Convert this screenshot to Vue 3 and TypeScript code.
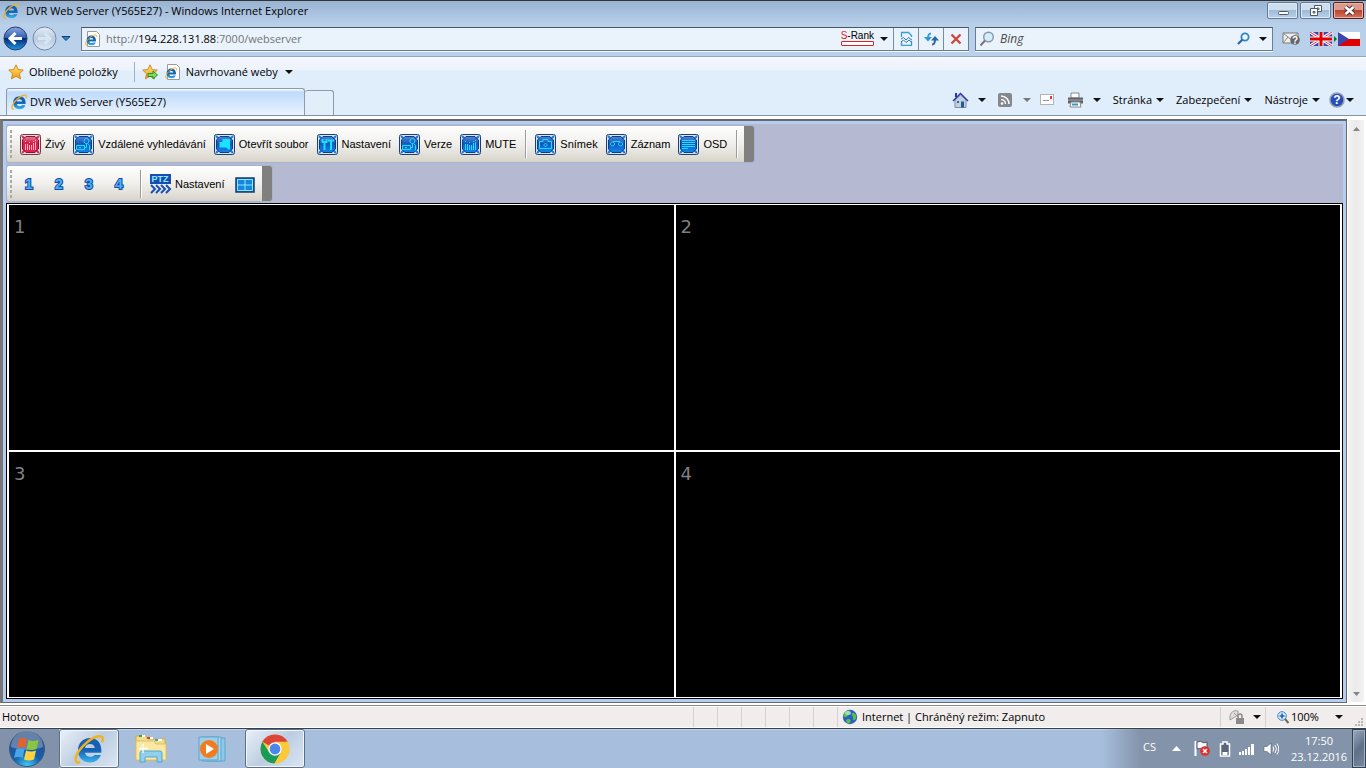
<script setup lang="ts">
import { ref } from 'vue'

type Tool = { id: string; label: string; glyph: string; red?: boolean; sep?: boolean }

const tools: Tool[] = [
  { id: 'live', label: 'Živý', glyph: 'bars', red: true },
  { id: 'search', label: 'Vzdálené vyhledávání', glyph: 'reel' },
  { id: 'open', label: 'Otevřít soubor', glyph: 'folder' },
  { id: 'setup', label: 'Nastavení', glyph: 'wrench' },
  { id: 'version', label: 'Verze', glyph: 'reel' },
  { id: 'mute', label: 'MUTE', glyph: 'bars', sep: true },
  { id: 'snap', label: 'Snímek', glyph: 'camera' },
  { id: 'record', label: 'Záznam', glyph: 'tape' },
  { id: 'osd', label: 'OSD', glyph: 'lines', sep: true },
]

const glyphs: Record<string, string> = {
  bars: 'M5.5 7v1M5.5 10v6M7.5 10v6M9.5 8v1M9.5 11v5M11.5 11v5M13.5 7v1M13.5 9v7M15.5 6v1M15.5 8v8',
  reel: 'M3.500 11.500h8v4h-8zM6 13.500h2M13.500 4.500a2.500 2.500 0 1 1-.1 0M11.500 13.500h2v-4M15 9.500l1.500 2v5',
  wrench: 'M5.500 5v3h4V5M7.500 8v8M11 6.500h6M14 6v10',
  camera: 'M4.500 7.500h3.500v-2h5v2h3.500v7h-12zM10.500 9.500a1.500 1.500 0 1 0 .1 0',
  tape: 'M6.500 8a2 2 0 1 0 .1 0M14.500 8a2 2 0 1 0 .1 0M7 7.500h7',
  lines: 'M4 6.500h13M4 8.500h13M4 10.500h13M4 12.500h13M4 14.500h6',
}

const address = ref('http://194.228.131.88:7000/webserver')
const query = ref('')
const cameras = [1, 2, 3, 4]
const menus = ['Stránka', 'Zabezpečení', 'Nástroje']
</script>

<template>
  <svg class="defs" aria-hidden="true">
    <defs>
      <linearGradient id="gold" x1="0" y1="0" x2="0" y2="1"><stop offset="0" stop-color="#ffe77a" /><stop offset="1" stop-color="#f39a10" /></linearGradient>
      <radialGradient id="orb" cx=".5" cy="1" r=".9"><stop offset="0" stop-color="#3fd0fa" /><stop offset=".45" stop-color="#125fae" /><stop offset="1" stop-color="#2a4f85" /></radialGradient>
      <linearGradient id="back" x1="0" y1="0" x2="0" y2="1"><stop offset="0" stop-color="#8fa9dc" /><stop offset=".48" stop-color="#2d5db5" /><stop offset=".5" stop-color="#06266f" /><stop offset="1" stop-color="#1d9ae8" /></linearGradient>
      <linearGradient id="fwd" x1="0" y1="0" x2="0" y2="1"><stop offset="0" stop-color="#e6eef8" /><stop offset=".5" stop-color="#b9cbe0" /><stop offset="1" stop-color="#dce8f5" /></linearGradient>
      <linearGradient id="ieblue" x1="0" y1="0" x2="0" y2="1"><stop offset="0" stop-color="#1a5fae" /><stop offset=".5" stop-color="#1462b4" /><stop offset="1" stop-color="#39b4ef" /></linearGradient>
      <linearGradient id="tileblue" x1="0" y1="0" x2="0" y2="1"><stop offset="0" stop-color="#4f86d6" /><stop offset=".45" stop-color="#1258bd" /><stop offset="1" stop-color="#1187f0" /></linearGradient>
      <linearGradient id="tilered" x1="0" y1="0" x2="0" y2="1"><stop offset="0" stop-color="#e6809a" /><stop offset=".4" stop-color="#cf1f4a" /><stop offset="1" stop-color="#e8204c" /></linearGradient>
      <symbol id="ie" viewBox="0.500 0.500 15 15">
        <path d="M14.200 9.900H6c.2 1.400 1.200 2 2.600 2 1 0 1.700-.3 2.200-.9h3.100c-.8 2.300-2.800 3.700-5.400 3.700-3.500 0-6-2.400-6-6S5 2.500 8.500 2.500c3.700 0 6 2.700 5.700 7.400zM10.900 7.500C10.700 6.200 9.800 5.500 8.500 5.500S6.300 6.200 6 7.500z" fill="url(#ieblue)" />
        <path d="M14.500 4.600c.9-2.300.1-3.300-1.800-3-3.800.6-9.300 5.700-11 9.600-1 2.500-.1 4 1.900 3.400" fill="none" stroke="#f2b21c" stroke-width="1.200" />
      </symbol>
      <symbol id="iepage" viewBox="0 0 16 16"><path d="M2.500 .5h9l3 3v12h-12z" fill="#fff" stroke="#9a9a9a" /><use href="#ie" x="0" y="3" width="12" height="12" /></symbol>
      <symbol id="star" viewBox="0 0 16 16"><path d="M8 .8l2.200 4.700 5.100.6-3.800 3.500 1 5.200L8 12.300l-4.500 2.500 1-5.200L.7 6.100l5.100-.6z" fill="url(#gold)" stroke="#c9831c" stroke-width=".9" /></symbol>
    </defs>
  </svg>

  <div class="screen">
    <header class="chrome">
      <div class="title-row">
        <svg class="i16"><use href="#ie" /></svg>
        <h1>DVR Web Server (Y565E27) - Windows Internet Explorer</h1>
        <div class="win-buttons">
          <button aria-label="Minimalizovat"><svg width="28" height="15"><rect x="9.500" y="8.500" width="10" height="3" rx="1" fill="#fff" stroke="#4d5868" /></svg></button>
          <button aria-label="Obnovit"><svg width="28" height="15" fill="#fff" stroke="#4d5868"><path d="M12.500 2.500h7v6h-7zM15 5h2v1.500h-2z" /><path d="M8.500 5.500h7v7h-7zM11 8.500h2v1.500h-2z" /></svg></button>
          <button class="close" aria-label="Zavřít"><svg width="28" height="15"><path d="M10.500 4l8 7M18.500 4l-8 7" stroke="#4b3239" stroke-width="4.500" /><path d="M10.500 4l8 7M18.500 4l-8 7" stroke="#fff" stroke-width="2.500" /></svg></button>
        </div>
      </div>

      <div class="nav-row">
        <div class="travel">
          <button aria-label="Zpět"><svg width="25" height="25"><circle cx="12.500" cy="12.500" r="11.500" fill="url(#back)" stroke="#24406f" /><path d="M19 12.500H8M12.500 7l-5.500 5.500 5.500 5.500" fill="none" stroke="#fff" stroke-width="3" /></svg></button>
          <button aria-label="Vpřed"><svg width="25" height="25"><circle cx="12.500" cy="12.500" r="11.500" fill="url(#fwd)" stroke="#74869f" /><path d="M6 12.500h11M12.500 7l5.500 5.500-5.500 5.500" fill="none" stroke="#d9e5f2" stroke-width="3" /></svg></button>
          <button aria-label="Poslední stránky"><svg width="10" height="7"><path d="M1 1.500h8L5 5.500z" fill="#2388d6" stroke="#163d70" /></svg></button>
        </div>
        <div class="address">
          <svg class="i16"><use href="#iepage" /></svg>
          <div class="url">
            <input v-model="address" type="text" aria-label="Adresa" spellcheck="false" />
            <span aria-hidden="true">http://<b>194.228.131.88</b>:7000/webserver</span>
          </div>
          <button class="rank"><span><i>S</i>-Rank</span></button>
          <button class="drop" aria-label="Zobrazit adresy"><span class="tri"></span></button>
          <button class="cell" aria-label="Kompatibilní zobrazení"><svg width="13" height="15" fill="none" stroke="#37a0d2"><path d="M1.500 6V1.500h7l3 3V6M1.500 10v4.500h10V10" stroke-width="1.300" /><path d="M1 8l2.500-1.500L6 9l2.500-2.500L12 9M1 11l2.500-2 2.500 2.500L9 9l3 2.500" stroke="#3377b8" /></svg></button>
          <button class="cell" aria-label="Aktualizovat"><svg width="15" height="14" fill="none" stroke-width="2"><path d="M7 1.500C4.500 1.500 4 3 4 7" stroke="#2a9ad6" /><path d="M0 5h8L4 9.500z" fill="#2a9ad6" /><path d="M8 12.500c2.500 0 3-1.500 3-5.500" stroke="#2865a8" /><path d="M7 8.500h8L11 4z" fill="#2865a8" /></svg></button>
          <button class="cell" aria-label="Zastavit"><svg width="12" height="12"><path d="M1.500 1.500l9 9M10.500 1.500l-9 9" stroke="#cc4642" stroke-width="2.400" /></svg></button>
        </div>
        <div class="search">
          <svg width="16" height="16"><circle cx="9.500" cy="6" r="4.800" fill="#d4ecfb" stroke="#8796a8" stroke-width="1.400" /><path d="M6 9.500L1.500 14.500" stroke="#777" stroke-width="2" /></svg>
          <input v-model="query" type="text" placeholder="Bing" aria-label="Hledat" />
          <button aria-label="Hledat"><svg width="13" height="13"><circle cx="8" cy="5" r="3.600" fill="#eef6fe" stroke="#2c86cc" stroke-width="1.800" /><path d="M5.500 7.500L1 12" stroke="#2b62a8" stroke-width="2.200" /></svg></button>
          <button aria-label="Možnosti hledání"><span class="tri"></span></button>
        </div>
        <button class="mail" aria-label="Zpráva"><svg width="19" height="15"><path d="M1 2h15v10H1z" fill="#eee" stroke="#777" /><path d="M1 2l7.500 6L16 2M1 12l5-6" fill="none" stroke="#888" /><circle cx="13" cy="9" r="4.800" fill="#666" /><text x="13" y="13" class="q" text-anchor="middle">?</text></svg></button>
        <button class="flags" aria-label="Přeložit">
          <svg width="50" height="14"><path d="M0 0h22v14H0z" fill="#3c46b0" /><path d="M0 0l22 14M22 0L0 14" stroke="#fff" stroke-width="3" /><path d="M0 0l22 14M22 0L0 14" stroke="#e23040" /><path d="M11 0v14M0 7h22" stroke="#fff" stroke-width="5" /><path d="M11 0v14M0 7h22" stroke="#e00000" stroke-width="3" /><path d="M24 4l3 3-3 3z" fill="#087a1d" /><path d="M28 0h22v7H28z" fill="#fff" /><path d="M28 7h22v7H28z" fill="#e00000" /><path d="M28 0l11 7-11 7z" fill="#3c46b0" /></svg>
        </button>
      </div>

      <div class="fav-row">
        <button><svg class="i16"><use href="#star" /></svg>Oblíbené položky</button>
        <span class="vline"></span>
        <button aria-label="Přidat k oblíbeným"><svg class="i16"><use href="#star" /><path d="M6 9.500h5V7l4.500 4-4.500 4v-2.500H6z" fill="#7be05c" stroke="#24922a" /></svg></button>
        <button class="sites"><svg class="i16"><use href="#iepage" /></svg>Navrhované weby<span class="tri"></span></button>
      </div>

      <div class="tab-row">
        <button class="tab"><svg class="i16"><use href="#ie" /></svg>DVR Web Server (Y565E27)</button>
        <button class="new-tab" aria-label="Nová karta"></button>
        <nav class="commands">
          <button class="home" aria-label="Domů"><svg width="17" height="17"><path d="M3 8v7.500h11V8L8.500 3z" fill="#c3d0e0" stroke="#7c8da4" /><path d="M1 9l7.500-7.500L16 9" fill="none" stroke="#2836a8" stroke-width="1.400" /><path d="M3 1h2v4H3z" fill="#2836a8" /><path d="M9 9.500h3v6H9z" fill="#1f5d96" /><path d="M5 9h2v2H5z" fill="#396487" /></svg><span class="tri"></span></button>
          <button class="feeds" aria-label="Kanály"><svg width="14" height="14"><rect width="14" height="14" rx="2" fill="#85888c" /><circle cx="4" cy="10.500" r="1.300" fill="#fff" /><path d="M3 6.500a4.500 4.500 0 0 1 4.500 4.500M3 3a8 8 0 0 1 8 8" fill="none" stroke="#fff" stroke-width="1.500" /></svg><span class="tri pale"></span></button>
          <button class="letter" aria-label="Číst poštu"><svg width="15" height="12"><rect x=".5" y=".5" width="13" height="10" fill="#fff" stroke="#b3b3b3" /><path d="M10 2h2v3h-2z" fill="#e23a3a" /><path d="M3 6.500h6" stroke="#999" /></svg></button>
          <button class="print" aria-label="Tisk"><svg width="17" height="16"><path d="M4 1h8v5H4z" fill="#fff" stroke="#888" /><path d="M1 5.500h15v6H1z" fill="#606468" /><path d="M1 8h15" stroke="#a3a8ad" /><path d="M4 10h9l1 5H3z" fill="#fff" stroke="#888" /><path d="M5 12.500h6" stroke="#3895c7" stroke-width="2" /></svg><span class="tri"></span></button>
          <button v-for="m in menus" :key="m" class="menu">{{ m }}<span class="tri"></span></button>
          <button class="help" aria-label="Nápověda"><svg width="16" height="16"><circle cx="8" cy="8" r="7" fill="#2450b8" stroke="#98a1b2" stroke-width="1.500" /><text x="8" y="12" class="q big" text-anchor="middle">?</text></svg><span class="tri"></span></button>
        </nav>
      </div>
    </header>

    <div class="viewport">
      <main class="page">
        <div class="toolbar main-tools" role="toolbar">
          <span class="grip"></span>
          <template v-for="t in tools" :key="t.id">
            <button class="tool">
              <svg width="21" height="21">
                <rect x=".5" y=".5" width="20" height="20" rx="2" :fill="t.red ? '#efd6dd' : '#d5e5f8'" :stroke="t.red ? '#7c3448' : '#1b3f74'" />
                <path d="M2 2l3 3M19 2l-3 3M2 19l3-3M19 19l-3-3" :stroke="t.red ? '#b83a5c' : '#2277dd'" stroke-width="2" />
                <path d="M6 2.500h9l1 1.500 2.500 2v9L17 16l-2 2.500H6L4.500 17l-2-2V6L4 4.500z" :fill="t.red ? 'url(#tilered)' : 'url(#tileblue)'" :stroke="t.red ? '#8b1232' : '#12407f'" />
                <path v-if="t.glyph === 'folder'" d="M8.500 5h7.500v10.500h-1.500L12 13.500H5.500V8h3z" fill="#18e4ff" />
                <path v-else :d="glyphs[t.glyph]" fill="none" :stroke="t.red ? '#ffb0c2' : '#18e0ff'" :stroke-width="t.glyph === 'wrench' ? 2 : 1" />
              </svg>{{ t.label }}
            </button>
            <span v-if="t.sep" class="sep"></span>
          </template>
          <span class="end"></span>
        </div>

        <div class="toolbar cam-tools" role="toolbar">
          <span class="grip"></span>
          <button v-for="n in cameras" :key="n" class="num">{{ n }}</button>
          <span class="sep"></span>
          <button class="ptz">
            <svg width="22" height="22"><rect width="21" height="10" y="1" fill="#174cb3" /><text x="10" y="9" class="ptz-text" text-anchor="middle">PTZ</text><path d="M1 12l4 4-4 4M6 12l4 4-4 4M11 12l4 4-4 4M16 12l4 4-4 4" fill="none" stroke="#1550b8" stroke-width="2" /></svg>Nastavení
          </button>
          <button class="quad" aria-label="Čtyři kamery"><svg width="20" height="16"><rect x="1" y="1" width="18" height="14" fill="#1685dd" stroke="#153d70" stroke-width="1.500" /><path d="M2.500 2.500h15v11h-15zM10 2v12M2 8h16" fill="none" stroke="#8be9ff" /></svg></button>
          <span class="end"></span>
        </div>

        <div class="wall">
          <section v-for="n in cameras" :key="n" class="feed">{{ n }}</section>
        </div>
      </main>
      <div class="scroll">
        <button aria-label="Nahoru"><svg width="7" height="4"><path d="M0 4l3.500-4L7 4z" fill="#858585" /></svg></button>
        <button aria-label="Dolů"><svg width="7" height="4"><path d="M0 0h7L3.500 4z" fill="#858585" /></svg></button>
      </div>
    </div>

    <div class="status">
      <span class="done">Hotovo</span>
      <span v-for="k in 6" :key="k" class="slot"></span>
      <span class="zone">
        <svg width="16" height="16"><circle cx="8" cy="8" r="7.200" fill="#2c5fc4" /><path d="M3 3c3-2 5-2 5 0S6 7 4 8 1 7 2 5zM10 4c3 0 5 2 4 5s-3 3-3 0-2-3-1-5zM6 10c3 0 3 2 2 4-2 1-4-1-4-3z" fill="#58c43c" /><ellipse cx="6" cy="4" rx="3" ry="2" fill="#d7f2ff" opacity=".6" /></svg>
        Internet | Chráněný režim: Zapnuto
      </span>
      <button class="guard" aria-label="Filtrování"><svg width="16" height="16"><path d="M1 8a6 6 0 0 1 8-6v4L1 11z" fill="#ddd" stroke="#999" /><path d="M5 4l4 4" stroke="#999" /><rect x="7" y="9" width="8" height="6" fill="#8a8a8a" /><path d="M9 9V7a2 2 0 0 1 4 0v2" fill="none" stroke="#8a8a8a" stroke-width="1.500" /></svg><span class="tri"></span></button>
      <button class="zoom"><svg width="12" height="13"><circle cx="5" cy="5" r="4.300" fill="#d9edfb" stroke="#3a86c8" /><path d="M5 2.500v5M2.500 5h5" stroke="#1f62b4" stroke-width="1.600" /><path d="M8 8l3.500 4" stroke="#7b6a50" stroke-width="2" /></svg>100%<span class="tri"></span></button>
      <svg class="corner" width="9" height="9" fill="#b8b8b8"><path d="M6 0h2v2H6zM3 3h2v2H3zM6 3h2v2H6zM0 6h2v2H0zM3 6h2v2H3zM6 6h2v2H6z" /></svg>
    </div>

    <footer class="taskbar">
      <button class="start" aria-label="Start">
        <svg width="38" height="38"><circle cx="19" cy="19" r="17.500" fill="url(#orb)" stroke="#35597f" /><path d="M3 17a16 16 0 0 1 32 0c-10 4-22 4-32 0z" fill="#fff" opacity=".28" /><path d="M11 9q4-2 8 0l-2 9q-4-2-8 0z" fill="#e8602c" /><path d="M20.500 10q4 2 10 0l-2 9q-5 2-10 0z" fill="#8bc53e" /><path d="M8 19.500q4-2 8.500 0l-2 8.500q-4-2-8.500 0z" fill="#4aa5e4" /><path d="M18 20.500q5 2 10 0l-2 9q-5 2-10 0z" fill="#ffd23e" /></svg>
      </button>
      <button class="task open" aria-label="Internet Explorer"><svg width="30" height="30"><use href="#ie" /></svg></button>
      <button class="task" aria-label="Průzkumník">
        <svg width="34" height="32"><path d="M2 3h10l2 3h17v21H2z" fill="#f2dc8a" stroke="#d3ad4c" /><path d="M5 2h6v2H5zM13 4h6v2h-6zM21 6h7v2h-7z" fill="#fff" /><path d="M5 2h3v2H5z" fill="#36b03c" /><path d="M13 4h3v2h-3z" fill="#d6402c" /><path d="M21 6h3v2h-3z" fill="#38a0e0" /><path d="M2 8h18l2 3h10v16H2z" fill="#fae9a4" stroke="#dfbe62" /><path d="M6 29V20q0-2 2-2h18q2 0 2 2v9h-5v-5H11v5z" fill="#8fd0ee" stroke="#54a4cc" /><path d="M9 11v9M5 15.500h9" stroke="#fff" stroke-width="1.300" /></svg>
      </button>
      <button class="task" aria-label="Přehrávač médií">
        <svg width="30" height="28"><path d="M8 3h19v23H8z" fill="#8cc9ea" stroke="#5fa5cc" /><path d="M4 2h19v24H4z" fill="#a3d6f1" stroke="#5fa5cc" /><path d="M1 2h19v23H1z" fill="#9dcfe9" stroke="#64a3c8" /><circle cx="11" cy="14" r="9" fill="#f27b1d" /><path d="M8 9v10l8-5z" fill="#fff" /></svg>
      </button>
      <button class="task open" aria-label="Google Chrome">
        <svg width="30" height="30" viewBox="0 0 30 30"><circle cx="15" cy="15" r="14.500" fill="#fbc93a" /><path d="M15 15L2.400 7.800A14.500 14.500 0 0 1 27.600 7.800H15z" fill="#dc4638" /><path d="M2.400 7.800A14.500 14.500 0 0 0 14.500 29.500L21 19 15 15 9 18z" fill="#1a9c58" /><path d="M15 8.300h12.800A14.500 14.500 0 0 1 14.500 29.500L21 18z" fill="#fbc93a" /><circle cx="15" cy="15" r="6.700" fill="#fff" /><circle cx="15" cy="15" r="5.400" fill="#4a86ec" /></svg>
      </button>
      <div class="tray">
        <span class="lang">CS</span>
        <button class="more" aria-label="Skryté ikony"><svg width="9" height="5"><path d="M0 5l4.500-5L9 5z" fill="#fff" /></svg></button>
        <button aria-label="Centrum akcí"><svg width="17" height="17"><path d="M1.500 1v15" stroke="#fff" stroke-width="2" /><path d="M3 2q4-1.500 5 0t5 0v7q-3 1-5 0t-5 0z" fill="#f5f7fa" stroke="#4b5665" /><circle cx="11" cy="11" r="4.800" fill="#e02c2c" /><path d="M9 9l4 4M13 9l-4 4" stroke="#fff" stroke-width="1.500" /></svg></button>
        <button aria-label="Baterie"><svg width="12" height="16"><path d="M4 1h4v2h2.500v12h-9V3H4z" fill="#5a6779" stroke="#fff" stroke-width="1.500" /><path d="M3.500 11h5v3h-5z" fill="#fff" /></svg></button>
        <button aria-label="Síť"><svg width="16" height="12" fill="#fff"><path d="M0 9h2v3H0zM3 8h2v4H3zM6 6h2v6H6zM9 4h2v8H9zM12 1h3v11h-3z" /></svg></button>
        <button aria-label="Hlasitost"><svg width="16" height="14"><path d="M1 4.500h3l4-3.500v12L4 9.500H1z" fill="#fff" stroke="#556173" stroke-width=".6" /><path d="M10 4.500q1.500 2.500 0 5M12 3q3 4 0 8M14 1.500q3.500 5.500 0 11" fill="none" stroke="#fff" /></svg></button>
        <time class="clock"><span>17:50</span><span>23.12.2016</span></time>
        <button class="desktop" aria-label="Zobrazit plochu"></button>
      </div>
    </footer>
  </div>
</template>

<style>
body { margin: 0; }
</style>

<style scoped>
.defs { position: absolute; width: 0; height: 0; }
.screen { min-height: 100vh; display: flex; flex-direction: column; font: 11px/16px "Open Sans", "Noto Sans", sans-serif; color: #000; background: #fff; overflow: hidden; }
button { display: flex; align-items: center; justify-content: center; flex: none; padding: 0; border: 0; background: none; font: inherit; color: inherit; white-space: nowrap; }
input { border: 0; padding: 0; background: none; font: inherit; outline: 0; min-width: 0; }
svg { display: block; flex: none; }
.i16 { width: 16px; height: 16px; }
.tri { flex: none; width: 0; height: 0; border: 4px solid transparent; border-top-color: #111; border-bottom: 0; }
.tri.pale { border-top-color: #777; }
.q { font: bold 10px "Liberation Sans", sans-serif; fill: #fff; }
.q.big { font-size: 12px; }

.chrome { border-top: 1px solid #343434; background: linear-gradient(#98b3d2, #b9d0ea 24px, #bad1eb 55px, #8fa7c4 55px, #8fa7c4 56px, #fff 56px, #f1f5fd 58px, #edf3fc 69px, #e0edfa 70px); }
.title-row { display: flex; height: 20px; padding-left: 3px; align-items: center; }
.title-row h1 { flex: 1; margin: 0 0 0 7px; font-size: 11px; line-height: 16px; font-weight: 400; }
.win-buttons { display: flex; gap: 2px; padding-right: 2px; align-self: flex-start; padding-top: 1px; }
.win-buttons button { width: 31px; height: 17px; box-sizing: border-box; border: 1px solid #5f7a9b; border-radius: 2px; background: linear-gradient(#cfdeee 50%, #a1bad5 50%, #b9d2ec); box-shadow: inset 0 0 0 1px #dfeaf6; }
.win-buttons .close { border-color: #5c1f20; background: linear-gradient(#dc9a8d 50%, #bb4433 50%, #d6745c); box-shadow: inset 0 0 0 1px #e7b4a8; }

.nav-row { display: flex; height: 35px; align-items: center; padding: 0 6px 0 3px; border-bottom: 1px solid transparent; }
.travel { display: flex; align-items: center; width: 78px; gap: 4px; }
.address, .search { display: flex; align-items: stretch; height: 24px; box-sizing: border-box; border: 1px solid #6b7d92; border-top-color: #4b5664; background: #eaf2fb; box-shadow: 0 1px 0 #f4f8fc; }
.address { flex: 1; }
.address > .i16 { align-self: center; margin: 0 5px 0 3px; }
.url { position: relative; flex: 1; display: flex; align-items: center; min-width: 0; }
.url input { width: 100%; color: transparent; caret-color: #000; }
.url span { position: absolute; left: 0; color: #717579; pointer-events: none; white-space: nowrap; }
.url b { font-weight: 400; color: #000; }
.rank { font: 10px/10px "Liberation Sans", sans-serif; }
.rank span::after { content: ""; display: block; box-sizing: border-box; height: 5px; border: 1px solid #d62424; border-radius: 1px; background: #fff; }
.rank i { font-style: normal; color: #e42020; }
.drop { width: 19px; }
.cell { width: 25px; box-sizing: border-box; border-left: 1px solid #7c8b9e; }
.search { width: 298px; margin-left: 6px; align-items: center; }
.search > svg { margin: 0 5px 0 3px; }
.search input { flex: 1; font-style: italic; font-size: 12px; }
.search input::placeholder { color: #4c4c4c; opacity: 1; }
.search button { width: 19px; height: 22px; }
.mail { margin-left: 9px; }
.flags { margin-left: 9px; }

.fav-row { display: flex; align-items: center; height: 30px; padding-left: 8px; }
.fav-row button { gap: 5px; }
.vline { width: 1px; height: 20px; background: #a6b0bd; margin: 0 7px 0 16px; }
.fav-row .sites { margin-left: 7px; }
.fav-row .sites .tri { margin-left: 2px; }

.tab-row { display: flex; align-items: flex-end; height: 28px; padding: 0 12px 0 6px; border-bottom: 1px solid #8391a6; }
.tab, .new-tab { box-sizing: border-box; border: 1px solid #8c9bb0; border-bottom: 0; border-radius: 3px 3px 0 0; height: 27px; }
.tab { width: 299px; justify-content: flex-start; gap: 3px; padding-left: 4px; background: linear-gradient(#fff, #bfdafb 3px, #eaf3fd); }
.new-tab { width: 29px; height: 25px; background: #e3eefb; border-left: 0; }
.commands { flex: 1; display: flex; justify-content: flex-end; align-items: center; height: 30px; }
.home { gap: 9px; }
.feeds { gap: 11px; margin-left: 12px; }
.letter { margin-left: 9px; }
.print { gap: 9px; margin-left: 12px; }
.menu { gap: 4px; margin-left: 12px; }
.help { gap: 1px; margin-left: 9px; }

.viewport { flex: 1; display: flex; border-top: 3px solid #fff; }
.page { flex: 1; display: flex; flex-direction: column; align-items: flex-start; min-width: 0; background: #b5bad2; border: 2px solid #696969; border-left: 3px solid #767676; border-right-width: 1px; border-bottom-width: 1px; padding: 4px 3px 3px; box-shadow: inset 0 0 0 3px #b4cdf0; }
.toolbar { display: flex; align-items: center; box-sizing: border-box; height: 38px; border: 1px solid #a3b4cf; border-radius: 3px; background: linear-gradient(#fff, #f0efec 50%, #d8d4ca); font: 11px/16px "Liberation Sans", sans-serif; overflow: hidden; }
.cam-tools { margin-top: 2px; height: 37px; }
.grip { width: 2px; height: 28px; margin: 0 8px 0 3px; background: repeating-linear-gradient(#a9a9a9 0 3px, transparent 3px 5px); }
.tool { gap: 4px; margin-right: 8px; }
.sep { width: 1px; height: 28px; background: #9b9b9b; border-right: 1px solid #fff; margin: 0 8px 0 1px; }
.main-tools .sep:nth-last-child(2) { margin-right: 6px; }
.end { align-self: stretch; width: 10px; background: #808080; }
.num { width: 30px; font: bold 14px "Liberation Sans", sans-serif; color: #48b0ff; -webkit-text-stroke: 2px #164a96; paint-order: stroke fill; }
.cam-tools .grip { margin-right: 2px; }
.cam-tools .sep { margin-left: 6px; }
.ptz { gap: 3px; }
.ptz-text { font: bold 9px "Liberation Sans", sans-serif; fill: #8be8ff; }
.quad { margin: 2px 7px 0 10px; }

.wall { flex: 1; align-self: stretch; display: grid; grid-template-columns: 1fr 1fr; grid-template-rows: 1fr 1fr; gap: 2px; margin-top: 1px; border: 1px solid #000; padding: 1px 2px; background: #fff; }
.feed { background: #000; color: #808080; font: 18px/20px "DejaVu Sans", sans-serif; padding: 12px 5px; }

.scroll { display: flex; flex-direction: column; justify-content: space-between; width: 16px; margin: 1px 2px 1px 1px; background: linear-gradient(90deg, #f3f3f3, #eaeaea 50%, #f3f3f3); }
.scroll button { height: 17px; }

.status { display: flex; align-items: center; height: 20px; background: #f1edec; border: solid #fff; border-width: 1px 0; box-shadow: 0 -1px 0 #8c8c8c; margin-top: 3px; padding: 0 2px; }
.done { flex: 1; }
.slot { width: 23px; height: 20px; border-left: 1px solid #d5d1d0; }
.zone { display: flex; align-items: center; gap: 4px; width: 378px; height: 20px; padding-left: 4px; border-left: 1px solid #d5d1d0; }
.guard, .zoom { box-sizing: border-box; height: 20px; border-left: 1px solid #d5d1d0; justify-content: flex-start; }
.guard { width: 45px; gap: 8px; padding-left: 8px; }
.zoom { width: 90px; gap: 2px; padding-left: 11px; }
.zoom .tri { margin-left: 14px; }
.corner { align-self: flex-end; }

.taskbar { display: flex; align-items: stretch; height: 39px; border-top: 1px solid #35414f; background: #a7bfdc; box-shadow: inset 0 1px 0 #c0d2e7; }
.start { width: 59px; background: #8292aa; padding-right: 5px; box-sizing: border-box; }
.task { width: 60px; margin-right: 2px; box-sizing: border-box; border-radius: 3px; }
.task.open { border: 1px solid #5d6f86; background: linear-gradient(135deg, #e9f0f8, #bccde2 50%, #dbe6f2); box-shadow: inset 0 0 0 1px #f3f7fb; }
.tray { flex: 1; display: flex; align-items: center; justify-content: flex-end; background: linear-gradient(90deg, transparent calc(100% - 265px), #8393aa calc(100% - 225px)); color: #fff; }
.tray button { margin-right: 8px; }
.lang { margin: 0 16px 4px 0; }
.tray .more { margin-right: 13px; }
.clock { display: flex; flex-direction: column; width: 64px; margin-right: 1px; text-align: center; white-space: nowrap; }
.tray .desktop { align-self: stretch; width: 14px; margin: 0; border: 1px solid #35414f; box-shadow: inset 0 0 0 1px #a3b2c5; background: linear-gradient(135deg, #9aabc1, #5e6f87 50%, #7788a0); }
</style>
